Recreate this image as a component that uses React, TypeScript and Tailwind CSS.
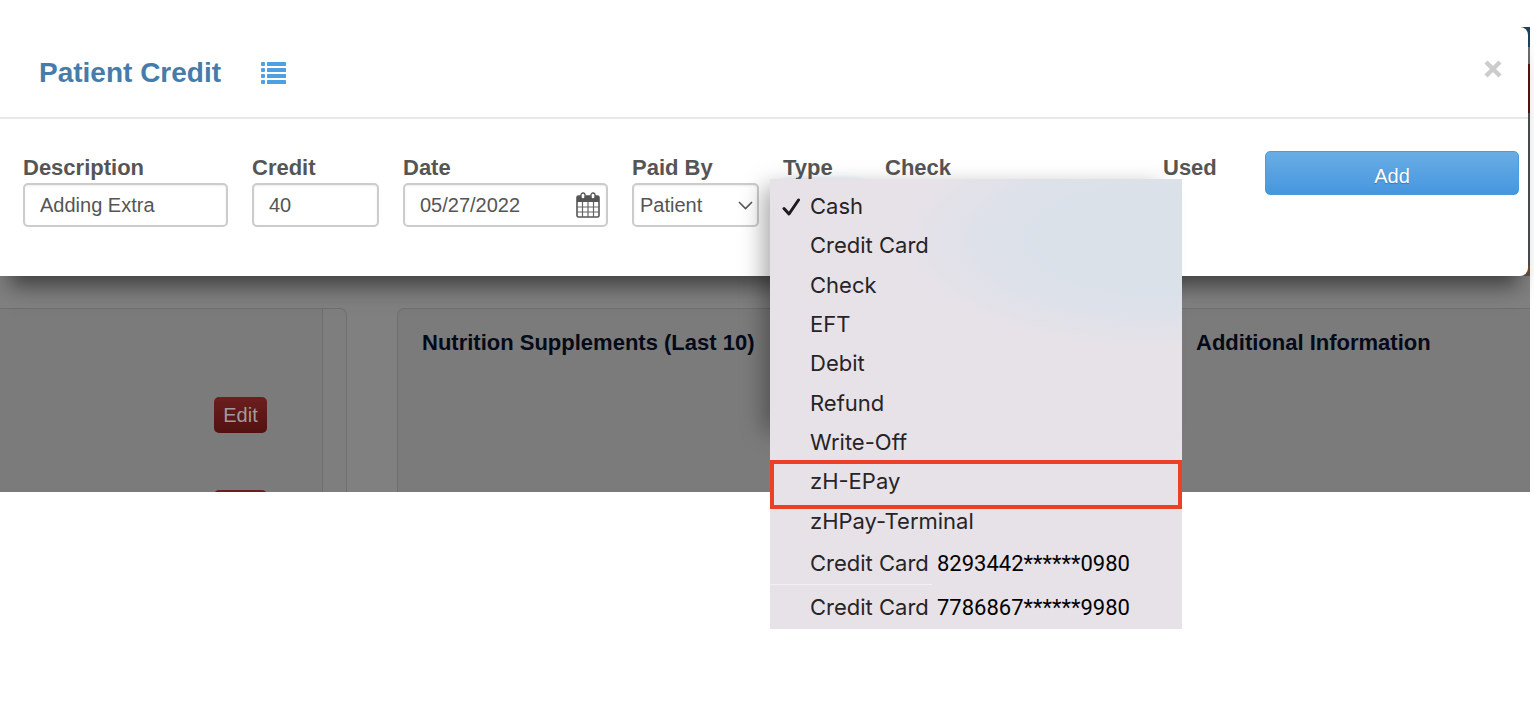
import { useState } from "react";

const payTypes = [
  "Cash",
  "Credit Card",
  "Check",
  "EFT",
  "Debit",
  "Refund",
  "Write-Off",
  "zH-EPay",
  "zHPay-Terminal",
];

const savedCards = ["8293442******0980", "7786867******9980"];

const labelClass = "block text-[22px] leading-[24px] font-bold text-[#555]";
const fieldClass =
  "block w-full h-[44px] rounded-[5px] border-2 border-[#ccc] bg-white text-[20px] text-[#555] shadow-[inset_0_1px_2px_rgba(0,0,0,0.08)]";

function ListIcon() {
  return (
    <svg width="26" height="24" viewBox="0 0 26 24" fill="#4f9fe3" aria-hidden="true">
      {[0, 6, 12, 18].map((y) => (
        <g key={y}>
          <rect x="0" y={y + 1} width="4" height="4" rx="1" />
          <rect x="6" y={y + 1} width="19" height="4" rx="0.6" />
        </g>
      ))}
    </svg>
  );
}

function CalendarIcon() {
  return (
    <svg width="24" height="26" viewBox="0 0 24 26" aria-hidden="true">
      <rect x="1" y="4" width="22" height="21" rx="1.5" fill="#fff" stroke="#555" strokeWidth="1.6" />
      <path d="M1 4h22v6H1z" fill="#555" />
      <path d="M6.5 10v15M12 10v15M17.5 10v15M1 15h22M1 20h22" stroke="#666" strokeWidth="1.2" />
      <rect x="5" y="1" width="4" height="6" rx="2" fill="#fff" stroke="#555" strokeWidth="1.3" />
      <rect x="15" y="1" width="4" height="6" rx="2" fill="#fff" stroke="#555" strokeWidth="1.3" />
    </svg>
  );
}

function TypeMenu({ value, onPick }: { value: string; onPick: (v: string) => void }) {
  return (
    <div className="absolute -top-[1px] -left-[13px] z-20 w-[412px] font-[Inter,sans-serif] text-[22px] text-[#262427]">
      <div className="absolute inset-x-0 top-0 -z-10 h-[260px] shadow-[-14px_0_22px_-8px_rgba(0,0,0,0.35)]" />
      <div
        role="listbox"
        aria-label="Type"
        className="bg-[#e7e2e8] bg-[radial-gradient(ellipse_250px_110px_at_380px_60px,#dae1e9_40%,#dde1ea_65%,transparent)] pt-[8px]"
      >
        <div className="grid h-[354px] auto-rows-fr">
          {payTypes.map((t) => (
            <button
              key={t}
              type="button"
              role="option"
              aria-selected={t === value}
              onClick={() => onPick(t)}
              className="relative flex items-center pl-[40px] text-left"
            >
              {t === value && (
                <svg className="absolute left-[12px]" width="19" height="18" viewBox="0 0 19 18" aria-hidden="true">
                  <path d="M2 10.5L7 16L16.5 2" fill="none" stroke="#1c1b1d" strokeWidth="3" strokeLinecap="round" strokeLinejoin="round" />
                </svg>
              )}
              {t}
              {t === "zH-EPay" && (
                <span className="absolute inset-x-0 -top-[2px] h-[49px] border-4 border-[#ea4025]" />
              )}
            </button>
          ))}
        </div>
        {savedCards.map((c, i) => (
          <button
            key={c}
            type="button"
            role="option"
            aria-selected={false}
            className="relative flex h-[44px] w-full items-center pl-[40px] text-left"
          >
            <span className="w-[127px]">Credit Card</span>
            <span className="font-[Roboto,sans-serif] text-black">{c}</span>
            {i === 0 && <span className="absolute bottom-0 left-0 h-px w-[162px] bg-[#f3f0f4]" />}
          </button>
        ))}
      </div>
    </div>
  );
}

const editClass =
  "h-[36px] w-[53px] shrink-0 rounded-[5px] bg-linear-to-b from-[#6c1f1e] to-[#521110] text-[20px] text-[#a09c9c]";

export default function App() {
  const [description, setDescription] = useState("Adding Extra");
  const [credit, setCredit] = useState("40");
  const [date, setDate] = useState("05/27/2022");
  const [paidBy, setPaidBy] = useState("Patient");
  const [type, setType] = useState("Cash");

  return (
    <main className="min-h-screen bg-white pt-[27px] font-['Liberation_Sans',Arial,sans-serif]">
      <div className="mr-[4px] bg-[#808080]">
        {/* right sliver of the page shows behind the dialog */}
        <div className="bg-[linear-gradient(#1d4060_0_20px,#6e6e6e_20px_37px,#5a1212_37px_86px,#4c5052_86px_238px,#7a4a26_238px_246px,#555_246px)]">
          <div
            role="dialog"
            aria-labelledby="dialog-title"
            className="relative z-10 mr-[2px] rounded-r-[8px] bg-white shadow-[0_20px_20px_-10px_rgba(0,0,0,0.5)]"
          >
            <header className="flex h-[92px] items-center border-b-2 border-[#e8e8e8] pt-[2px] pr-[26px] pl-[39px]">
              <h1 id="dialog-title" className="text-[28px] font-bold text-[#457cab]">
                Patient Credit
              </h1>
              <button type="button" aria-label="List credits" className="ml-[40px]">
                <ListIcon />
              </button>
              <button type="button" aria-label="Close" className="mb-[8px] ml-auto">
                <svg width="18" height="18" viewBox="0 0 18 18" aria-hidden="true">
                  <path d="M2 2L16 16M16 2L2 16" stroke="#ccc" strokeWidth="4.4" />
                </svg>
              </button>
            </header>

            <form
              onSubmit={(e) => e.preventDefault()}
              className="grid h-[157px] grid-cols-[205fr_127fr_205fr_127fr_78fr_254fr_78fr_254fr] content-start gap-[24px] pt-[32px] pr-[9px] pl-[23px]"
            >
              <div className="pt-[5px]">
                <label htmlFor="description" className={labelClass}>Description</label>
                <input
                  id="description"
                  className={`${fieldClass} mt-[3px] px-[15px]`}
                  value={description}
                  onChange={(e) => setDescription(e.target.value)}
                />
              </div>
              <div className="pt-[5px]">
                <label htmlFor="credit" className={labelClass}>Credit</label>
                <input
                  id="credit"
                  className={`${fieldClass} mt-[3px] px-[15px]`}
                  value={credit}
                  onChange={(e) => setCredit(e.target.value)}
                />
              </div>
              <div className="pt-[5px]">
                <label htmlFor="date" className={labelClass}>Date</label>
                <div className="relative mt-[3px]">
                  <input
                    id="date"
                    className={`${fieldClass} px-[15px]`}
                    value={date}
                    onChange={(e) => setDate(e.target.value)}
                  />
                  <button type="button" aria-label="Open calendar" className="absolute top-[9px] right-[8px]">
                    <CalendarIcon />
                  </button>
                </div>
              </div>
              <div className="pt-[5px]">
                <label htmlFor="paid-by" className={labelClass}>Paid By</label>
                <div className="relative mt-[3px]">
                  <select
                    id="paid-by"
                    className={`${fieldClass} appearance-none px-[6px]`}
                    value={paidBy}
                    onChange={(e) => setPaidBy(e.target.value)}
                  >
                    <option>Patient</option>
                    <option>Insurance</option>
                  </select>
                  <svg className="pointer-events-none absolute top-[18px] right-[6px]" width="15" height="9" viewBox="0 0 15 9" aria-hidden="true">
                    <path d="M1 1L7.5 7.6L14 1" fill="none" stroke="#555" strokeWidth="1.5" />
                  </svg>
                </div>
              </div>
              <div className="pt-[5px]">
                <span className={labelClass}>Type</span>
                <div className="relative pt-[3px]">
                  <button
                    type="button"
                    aria-haspopup="listbox"
                    aria-expanded="true"
                    aria-label="Choose type"
                    className="block h-[44px] w-full rounded-[5px] border-2 border-[#66afe9] shadow-[0_0_10px_rgba(102,175,233,0.6)]"
                  />
                  <TypeMenu value={type} onPick={setType} />
                </div>
              </div>
              <div className="pt-[5px]">
                <span className={labelClass}>Check</span>
              </div>
              <div className="pt-[5px]">
                <span className={labelClass}>Used</span>
              </div>
              <button
                type="submit"
                className="h-[44px] rounded-[5px] border border-[#4a9be0] bg-linear-to-b from-[#6aade4] to-[#4596df] pt-[5px] text-[20px] text-white [text-shadow:0_1px_1px_rgba(0,0,0,0.25)]"
              >
                Add
              </button>
            </form>
          </div>
        </div>

        <div className="grid h-[216px] grid-cols-[347fr_724fr_359fr] gap-[50px] overflow-hidden pt-[32px] text-[22px] font-bold text-[#040a18]">
          <section className="flex overflow-hidden rounded-tr-[7px] border-t border-r border-[#6f6f6f] bg-[#7e7e7e]">
            <div className="mr-[23px] flex flex-1 flex-col items-end gap-[57px] border-r border-[#6f6f6f] bg-[#7b7b7b] pt-[88px] pr-[55px] font-normal">
              <button type="button" className={editClass}>Edit</button>
              <button type="button" aria-label="Edit next entry" className={editClass} />
            </div>
          </section>
          <section className="rounded-t-[7px] border border-b-0 border-[#6f6f6f] bg-[#7b7b7b] px-[24px] pt-[22px]">
            <h2 className="leading-[24px]">Nutrition Supplements (Last 10)</h2>
          </section>
          <section className="rounded-tl-[7px] border-t border-l border-[#6f6f6f] bg-[#7b7b7b] px-[24px] pt-[22px]">
            <h2 className="leading-[24px]">Additional Information</h2>
          </section>
        </div>
      </div>
    </main>
  );
}
